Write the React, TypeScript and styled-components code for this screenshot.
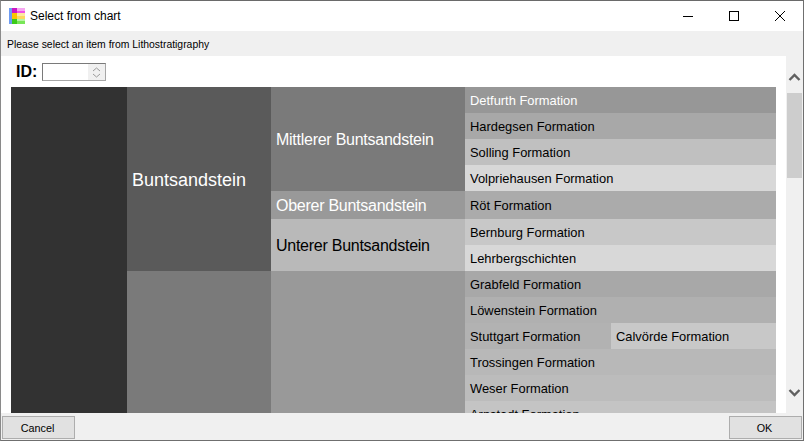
import React from "react";
import styled, { createGlobalStyle } from "styled-components";

const Global = createGlobalStyle`
  html, body { margin: 0; padding: 0; background: #fff; }
  body { font-family: "Liberation Sans", Arial, sans-serif; }
`;

const Win = styled.div`
  width: 804px; height: 441px; box-sizing: border-box; overflow: hidden;
  border: 1px solid #6f6f6f; border-left-color: #8a8a8a; border-top-color: #6a6a6a;
  display: flex; flex-direction: column; background: #f0f0f0; color: #000;
`;
const TitleBar = styled.div`
  height: 30px; flex: none; background: #fff; display: flex; align-items: center; padding-left: 8px;
`;
const AppIcon = styled.svg`width: 16px; height: 16px; flex: none; margin-right: 5px;`;
const TitleText = styled.span`font-size: 12px; flex: 1;`;
const WinBtn = styled.div`
  width: 46px; height: 30px; display: flex; align-items: center; justify-content: center;
`;
const Hint = styled.div`
  height: 25px; flex: none; background: #f0f0f0; font-size: 10.4px; display: flex; align-items: center; padding: 1px 0 0 6px; box-sizing: border-box;
`;
const Middle = styled.div`flex: 1; min-height: 0; display: flex;`;
const Content = styled.div`
  width: 785px; flex: none; background: #fff; display: flex; flex-direction: column; padding-left: 10px; box-sizing: border-box; overflow: hidden;
`;
const IdRow = styled.div`
  height: 31px; flex: none; display: flex; align-items: center; padding: 0 0 0 5px; gap: 5px;
`;
const IdLabel = styled.span`font-size: 16px; font-weight: bold;`;
const Spin = styled.div`
  width: 64px; height: 18px; box-sizing: border-box; border: 1px solid #a6a6a6; border-left-color: #7a7a7a; border-top-color: #7a7a7a; display: flex; justify-content: flex-end; background: #fff; margin-top: 1px;
`;
const SpinBtns = styled.div`
  width: 17px; background: #f0f0f0; display: flex; flex-direction: column; align-items: center; justify-content: space-around; padding: 2px 0;
`;
const Chart = styled.div`width: 765px; flex: 1; min-height: 0; display: flex; overflow: hidden;`;
const Column = styled.div<{ $w: number }>`
  width: ${(p) => p.$w}px; flex: none; display: flex; flex-direction: column; height: 340px;
`;
const Block = styled.div<{ $h: number; $bg: string; $light?: boolean; $big?: boolean }>`
  height: ${(p) => p.$h}px; flex: none; background: ${(p) => p.$bg}; color: ${(p) => (p.$light ? "#fff" : "#000")};
  font-size: ${(p) => (p.$big ? "18px" : "16px")}; letter-spacing: ${(p) => (p.$big ? "0" : "-0.26px")};
  display: flex; align-items: center; padding: 2px 0 0 5px; box-sizing: border-box; white-space: nowrap;
`;
const Row = styled.div<{ $h: number; $bg: string; $light?: boolean }>`
  height: ${(p) => p.$h}px; flex: none; background: ${(p) => p.$bg}; color: ${(p) => (p.$light ? "#fff" : "#000")};
  font-size: 12.9px; display: flex; align-items: center; padding-left: 5px; box-sizing: border-box; white-space: nowrap;
`;
const SplitRow = styled.div`display: flex; height: 26px; flex: none;`;
const SplitCell = styled.div<{ $bg: string; $w?: number }>`
  ${(p) => (p.$w ? `width:${p.$w}px;flex:none;` : "flex:1;")}
  background: ${(p) => p.$bg}; font-size: 12.9px; display: flex; align-items: center; padding-left: 5px; box-sizing: border-box; white-space: nowrap;
`;
const Scrollbar = styled.div`
  width: 17px; flex: none; background: #f0f0f0; display: flex; flex-direction: column; align-items: center;
`;
const ScrollArrow = styled.div<{ $up?: boolean }>`
  height: 17px; width: 17px; flex: none; display: flex; align-items: center; justify-content: center;
  margin: ${(p) => (p.$up ? "13px 0 7px" : "0 0 12px")};
`;
const ScrollThumb = styled.div`width: 15px; height: 85px; flex: none; background: #cdcdcd;`;
const ScrollTrack = styled.div`flex: 1;`;
const Footer = styled.div`
  height: 27px; flex: none; display: flex; justify-content: space-between; align-items: flex-start; padding: 3px 0 0 1px; box-sizing: border-box; background: #f0f0f0;
`;
const Button = styled.div`
  width: 73px; height: 23px; box-sizing: border-box; border: 1px solid #adadad; background: #e1e1e1; font-size: 10.8px; display: flex; align-items: center; justify-content: center; margin-right: 1px; padding-right: 2px;
`;

const formations = [
  { t: "Detfurth Formation", h: 26, bg: "#979797", light: true },
  { t: "Hardegsen Formation", h: 26, bg: "#a8a8a8" },
  { t: "Solling Formation", h: 26, bg: "#c0c0c0" },
  { t: "Volpriehausen Formation", h: 26, bg: "#d8d8d8" },
  { t: "Röt Formation", h: 28, bg: "#ababab" },
  { t: "Bernburg Formation", h: 26, bg: "#c8c8c8" },
  { t: "Lehrbergschichten", h: 26, bg: "#d8d8d8" },
  { t: "Grabfeld Formation", h: 26, bg: "#a8a8a8" },
  { t: "Löwenstein Formation", h: 26, bg: "#b0b0b0" },
];
const later = [
  { t: "Trossingen Formation", h: 26, bg: "#b8b8b8" },
  { t: "Weser Formation", h: 26, bg: "#bcbcbc" },
  { t: "Arnstadt Formation", h: 26, bg: "#c4c4c4" },
];

export default function App() {
  return (
    <Win>
      <Global />
      <TitleBar>
        <AppIcon viewBox="0 0 16 16">
          <rect x="0" y="0" width="3" height="16" fill="#6f9cf2" />
          <rect x="3" y="0" width="5" height="5" fill="#cc16c4" />
          <rect x="3" y="5" width="5" height="6" fill="#fbc400" />
          <rect x="3" y="11" width="5" height="5" fill="#3ccb1a" />
          <rect x="8" y="0" width="8" height="3" fill="#f7a6f2" />
          <rect x="8" y="3" width="8" height="2" fill="#f050e8" />
          <rect x="8" y="5" width="8" height="3" fill="#fde8a0" />
          <rect x="8" y="8" width="8" height="3" fill="#fed860" />
          <rect x="8" y="11" width="8" height="2" fill="#b8f4a4" />
          <rect x="8" y="13" width="8" height="3" fill="#78e658" />
        </AppIcon>
        <TitleText>Select from chart</TitleText>
        <WinBtn>
          <svg width="10" height="10" viewBox="0 0 10 10"><rect x="0" y="5" width="10" height="1" fill="#000" /></svg>
        </WinBtn>
        <WinBtn>
          <svg width="10" height="10" viewBox="0 0 10 10"><rect x="0.5" y="0.5" width="9" height="9" fill="none" stroke="#000" /></svg>
        </WinBtn>
        <WinBtn>
          <svg width="10" height="10" viewBox="0 0 10 10"><path d="M0 0L10 10M10 0L0 10" stroke="#000" strokeWidth="1" fill="none" /></svg>
        </WinBtn>
      </TitleBar>
      <Hint>Please select an item from Lithostratigraphy</Hint>
      <Middle>
        <Content>
          <IdRow>
            <IdLabel>ID:</IdLabel>
            <Spin>
              <SpinBtns>
                <svg width="9" height="5" viewBox="0 0 9 5"><path d="M1 4L4.5 1L8 4" stroke="#9a9a9a" fill="none" /></svg>
                <svg width="9" height="5" viewBox="0 0 9 5"><path d="M1 1L4.5 4L8 1" stroke="#9a9a9a" fill="none" /></svg>
              </SpinBtns>
            </Spin>
          </IdRow>
          <Chart>
            <Column $w={116}>
              <Block $h={340} $bg="#323232" />
            </Column>
            <Column $w={144}>
              <Block $h={184} $bg="#5a5a5a" $light $big>Buntsandstein</Block>
              <Block $h={156} $bg="#7a7a7a" />
            </Column>
            <Column $w={194}>
              <Block $h={104} $bg="#7a7a7a" $light>Mittlerer Buntsandstein</Block>
              <Block $h={28} $bg="#999999" $light>Oberer Buntsandstein</Block>
              <Block $h={52} $bg="#b9b9b9">Unterer Buntsandstein</Block>
              <Block $h={156} $bg="#999999" />
            </Column>
            <Column $w={311}>
              {formations.map((f) => (
                <Row key={f.t} $h={f.h} $bg={f.bg} $light={f.light}>{f.t}</Row>
              ))}
              <SplitRow>
                <SplitCell $bg="#b2b2b2" $w={146}>Stuttgart Formation</SplitCell>
                <SplitCell $bg="#c8c8c8">Calvörde Formation</SplitCell>
              </SplitRow>
              {later.map((f) => (
                <Row key={f.t} $h={f.h} $bg={f.bg}>{f.t}</Row>
              ))}
            </Column>
          </Chart>
        </Content>
        <Scrollbar>
          <ScrollArrow $up>
            <svg width="13" height="9" viewBox="0 0 13 9"><path d="M1.5 7L6.5 2L11.5 7" stroke="#606060" strokeWidth="2.4" fill="none" /></svg>
          </ScrollArrow>
          <ScrollThumb />
          <ScrollTrack />
          <ScrollArrow>
            <svg width="13" height="9" viewBox="0 0 13 9"><path d="M1.5 2L6.5 7L11.5 2" stroke="#606060" strokeWidth="2.4" fill="none" /></svg>
          </ScrollArrow>
        </Scrollbar>
      </Middle>
      <Footer>
        <Button>Cancel</Button>
        <Button>OK</Button>
      </Footer>
    </Win>
  );
}
